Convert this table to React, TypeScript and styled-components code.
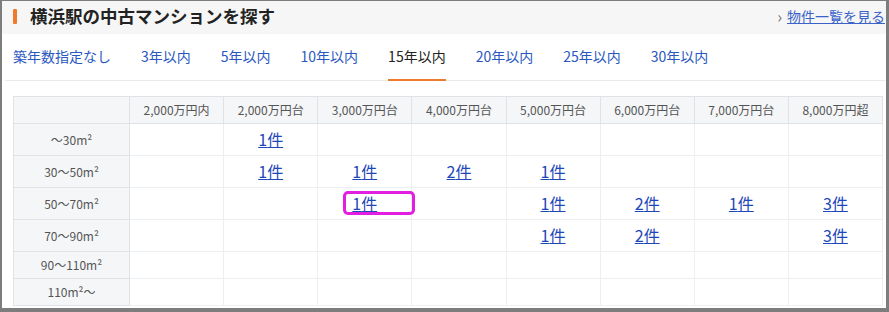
import React from "react"
import styled, { createGlobalStyle } from "styled-components"

const GlobalStyle = createGlobalStyle`
  html, body {
    margin: 0;
    padding: 0;
    background: #fff;
  }
  body {
    font-family: "Noto Sans CJK JP", "Noto Sans", sans-serif;
  }
`

const tabs = [
  "築年数指定なし",
  "3年以内",
  "5年以内",
  "10年以内",
  "15年以内",
  "20年以内",
  "25年以内",
  "30年以内",
]
const activeTab = "15年以内"

const prices = [
  "2,000万円内",
  "2,000万円台",
  "3,000万円台",
  "4,000万円台",
  "5,000万円台",
  "6,000万円台",
  "7,000万円台",
  "8,000万円超",
]

type Row = { label: string; counts: (number | null)[] }

const rows: Row[] = [
  { label: "〜30m²", counts: [null, 1, null, null, null, null, null, null] },
  { label: "30〜50m²", counts: [null, 1, 1, 2, 1, null, null, null] },
  { label: "50〜70m²", counts: [null, null, 1, null, 1, 2, 1, 3] },
  { label: "70〜90m²", counts: [null, null, null, null, 1, 2, null, 3] },
  { label: "90〜110m²", counts: [null, null, null, null, null, null, null, null] },
  { label: "110m²〜", counts: [null, null, null, null, null, null, null, null] },
]

function App() {
  return (
    <>
      <GlobalStyle />
      <Frame>
        <Header>
          <TitleBar />
          <Title>横浜駅の中古マンションを探す</Title>
          <MoreLink>
            <Chevron>›</Chevron>
            <a href="#">物件一覧を見る</a>
          </MoreLink>
        </Header>

        <Tabs>
          {tabs.map((tab) => (
            <Tab key={tab} $active={tab === activeTab}>
              {tab}
            </Tab>
          ))}
        </Tabs>

        <TableWrap>
          <Table>
            <colgroup>
              <col style={{ width: 116 }} />
              {prices.map((p) => (
                <col key={p} />
              ))}
            </colgroup>
            <thead>
              <tr>
                <HeadCell />
                {prices.map((p) => (
                  <HeadCell key={p}>{p}</HeadCell>
                ))}
              </tr>
            </thead>
            <tbody>
              {rows.map((row, ri) => (
                <tr key={row.label}>
                  <RowHead>{row.label}</RowHead>
                  {row.counts.map((count, ci) => (
                    <Cell key={ci}>
                      {count !== null && <CountLink href="#">{count}件</CountLink>}
                      {ri === 2 && ci === 2 && <Highlight />}
                    </Cell>
                  ))}
                </tr>
              ))}
            </tbody>
          </Table>
        </TableWrap>
      </Frame>
    </>
  )
}

export default App

const Frame = styled.div`
  box-sizing: border-box;
  width: 889px;
  height: 312px;
  border-style: solid;
  border-color: #7d7d7d;
  border-width: 1px 3px 4px 2px;
  background: #fff;
  overflow: hidden;
`

const Header = styled.div`
  display: flex;
  align-items: center;
  height: 33px;
  padding: 0 1px 0 11px;
  background: #f6f6f6;
`

const TitleBar = styled.span`
  width: 4px;
  height: 15px;
  border-radius: 1px;
  background: #ee7b2c;
  margin-right: 13px;
  margin-top: -3px;
`

const Title = styled.h2`
  margin: -4px 0 0;
  font-size: 17.5px;
  font-weight: 700;
  color: #222;
  flex: 1;
`

const MoreLink = styled.div`
  display: flex;
  align-items: center;
  gap: 5px;
  font-size: 14px;
  margin-top: -4px;

  a {
    color: #3a63c9;
    text-decoration: underline;
  }
`

const Chevron = styled.span`
  color: #777;
  font-size: 16px;
  line-height: 1;
`

const Tabs = styled.div`
  display: flex;
  gap: 30px;
  margin: 0 1px 0 3px;
  padding-left: 8px;
  border-bottom: 1px solid #eaeaea;
`

const Tab = styled.div<{ $active: boolean }>`
  box-sizing: border-box;
  display: flex;
  align-items: center;
  height: 47px;
  padding-bottom: 1px;
  font-size: 14px;
  color: ${(p) => (p.$active ? "#222" : "#2a58c0")};
  border-bottom: 2px solid ${(p) => (p.$active ? "#ee7b2c" : "transparent")};
  margin-bottom: -1px;
  cursor: pointer;
`

const TableWrap = styled.div`
  padding: 15px 1px 0 11px;
`

const Table = styled.table`
  width: 870px;
  table-layout: fixed;
  border-collapse: collapse;
  border: 1px solid #dfe3e8;
`

const HeadCell = styled.th`
  height: 26px;
  padding: 0;
  font-size: 12px;
  line-height: 16px;
  font-weight: 400;
  color: #555;
  background: #f4f6f8;
  border: 1px solid #dfe3e8;
  text-align: center;
`

const RowHead = styled.th`
  height: 26px;
  padding: 0;
  font-size: 12px;
  line-height: 16px;
  font-weight: 400;
  color: #555;
  background: #f4f6f8;
  border: 1px solid #dfe3e8;
  text-align: center;
`

const Cell = styled.td`
  position: relative;
  padding: 0;
  text-align: center;
  border: 1px solid #eceff2;
  font-size: 12px;
  line-height: 12px;
`

const CountLink = styled.a`
  display: inline-block;
  vertical-align: top;
  font-size: 16px;
  line-height: 31px;
  color: #1e47b7;
  text-decoration: underline;
`

const Highlight = styled.span`
  position: absolute;
  left: 25px;
  top: 3px;
  width: 72px;
  height: 24px;
  box-sizing: border-box;
  border: 3px solid #e21fe0;
  border-radius: 5px;
  pointer-events: none;
`
